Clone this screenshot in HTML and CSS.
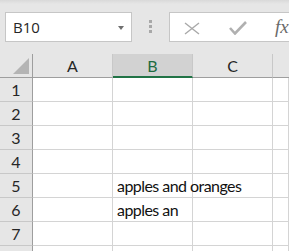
FILE: index.html
```html
<!DOCTYPE html>
<html lang="en">
<head>
    <meta charset="UTF-8">
    <title>Sheet</title>
    <link rel="stylesheet" href="styles.css">
</head>
<body>
    <div class="toolbar">
        <div class="name-box">
            <span class="name-text">B10</span>
            <span class="drop-arrow"></span>
        </div>
        <div class="grip">
            <span></span><span></span><span></span>
        </div>
        <div class="formula-box">
            <svg class="icon-cancel" width="16" height="13" viewBox="0 0 16 13">
                <path d="M1 1 L15 12 M15 1 L1 12" stroke="#a9a9a9" stroke-width="1.4" fill="none"/>
            </svg>
            <svg class="icon-enter" width="18" height="14" viewBox="0 0 18 14">
                <path d="M1 7 L6 12.5 L17 1" stroke="#b0b0b0" stroke-width="2.6" fill="none"/>
            </svg>
            <span class="fx">fx</span>
        </div>
    </div>

    <div class="sheet">
        <div class="corner"><span class="corner-mark"></span></div>
        <div class="col-head">A</div>
        <div class="col-head selected">B</div>
        <div class="col-head">C</div>
        <div class="col-head last"></div>

        <div class="row-head">1</div><div class="cell"></div><div class="cell"></div><div class="cell"></div><div class="cell"></div>
        <div class="row-head">2</div><div class="cell"></div><div class="cell"></div><div class="cell"></div><div class="cell"></div>
        <div class="row-head">3</div><div class="cell"></div><div class="cell"></div><div class="cell"></div><div class="cell"></div>
        <div class="row-head">4</div><div class="cell"></div><div class="cell"></div><div class="cell"></div><div class="cell"></div>
        <div class="row-head">5</div><div class="cell"></div><div class="cell text">apples and oranges</div><div class="cell"></div><div class="cell"></div>
        <div class="row-head">6</div><div class="cell"></div><div class="cell text">apples an</div><div class="cell"></div><div class="cell"></div>
        <div class="row-head">7</div><div class="cell"></div><div class="cell"></div><div class="cell"></div><div class="cell"></div>
        <!-- row 8 label falls below the visible frame -->
        <div class="row-head"></div><div class="cell"></div><div class="cell"></div><div class="cell"></div><div class="cell"></div>
    </div>
</body>
</html>
```

FILE: styles.css
```css
body {
    margin: 0;
    background-color: #ffffff;
    overflow: hidden;
    font-family: Lato, "Open Sans", sans-serif;
}

.toolbar {
    height: 54px;
    box-sizing: border-box;
    padding: 12px 0 0 5px;
    display: flex;
    align-items: flex-start;
    background: linear-gradient(#d9d9d9, #e6e6e6 4px);
}

.name-box {
    width: 127px;
    height: 30px;
    box-sizing: border-box;
    border: 1px solid #c6c6c6;
    background-color: #ffffff;
    display: flex;
    align-items: center;
    padding: 0 7px 0 7px;
    flex-shrink: 0;
}

.name-text {
    font-family: "Open Sans", sans-serif;
    font-size: 15px;
    color: #262626;
}

.drop-arrow {
    margin-left: auto;
    margin-top: 2px;
    width: 0;
    height: 0;
    border-left: 3.5px solid transparent;
    border-right: 3.5px solid transparent;
    border-top: 4px solid #6f6f6f;
}

.grip {
    margin: 8px 0 0 17px;
    display: flex;
    flex-direction: column;
    gap: 2px;
}

.grip span {
    width: 3px;
    height: 3px;
    background-color: #a8a8a8;
}

.formula-box {
    margin-left: 17px;
    width: 200px;
    height: 30px;
    box-sizing: border-box;
    border: 1px solid #c6c6c6;
    background-color: #ffffff;
    display: flex;
    align-items: center;
    flex-shrink: 0;
}

.icon-cancel {
    margin-left: 14px;
    margin-top: 2px;
}

.icon-enter {
    margin-left: 29px;
    margin-top: 1px;
}

.fx {
    margin-left: 28px;
    font-family: "Liberation Serif", serif;
    font-style: italic;
    font-size: 19px;
    color: #6a6a6a;
}

.sheet {
    display: grid;
    grid-template-columns: 33px 80px 80px 80px 1fr;
    grid-auto-rows: 24px;
    font-size: 16px;
    line-height: 23px;
}

.corner,
.col-head,
.row-head,
.cell {
    box-sizing: border-box;
    border-right: 1px solid #d4d4d4;
    border-bottom: 1px solid #d4d4d4;
}

.corner {
    background-color: #e6e6e6;
    border-right: 1px solid #9e9e9e;
    border-bottom: 1px solid #9e9e9e;
    display: flex;
    justify-content: flex-end;
    align-items: flex-end;
    padding: 0 3px 3px 0;
}

.corner-mark {
    width: 16px;
    height: 16px;
    background-color: #b4b4b4;
    clip-path: polygon(100% 0, 100% 100%, 0 100%);
}

.col-head {
    background-color: #e6e6e6;
    border-right: 1px solid #c8c8c8;
    border-bottom: 1px solid #9e9e9e;
    text-align: center;
    color: #262626;
}

.col-head.selected {
    background-color: #d2d2d2;
    color: #1e6b41;
    border-bottom: 2px solid #217346;
}

.col-head.last {
    border-right: none;
}

.row-head {
    background-color: #e6e6e6;
    border-right: 1px solid #9e9e9e;
    border-bottom: 1px solid #c8c8c8;
    text-align: center;
    color: #262626;
}

.cell.text {
    padding-left: 4px;
    white-space: nowrap;
    overflow: visible;
    letter-spacing: -0.55px;
    color: #111111;
    position: relative;
    z-index: 1;
}
```
